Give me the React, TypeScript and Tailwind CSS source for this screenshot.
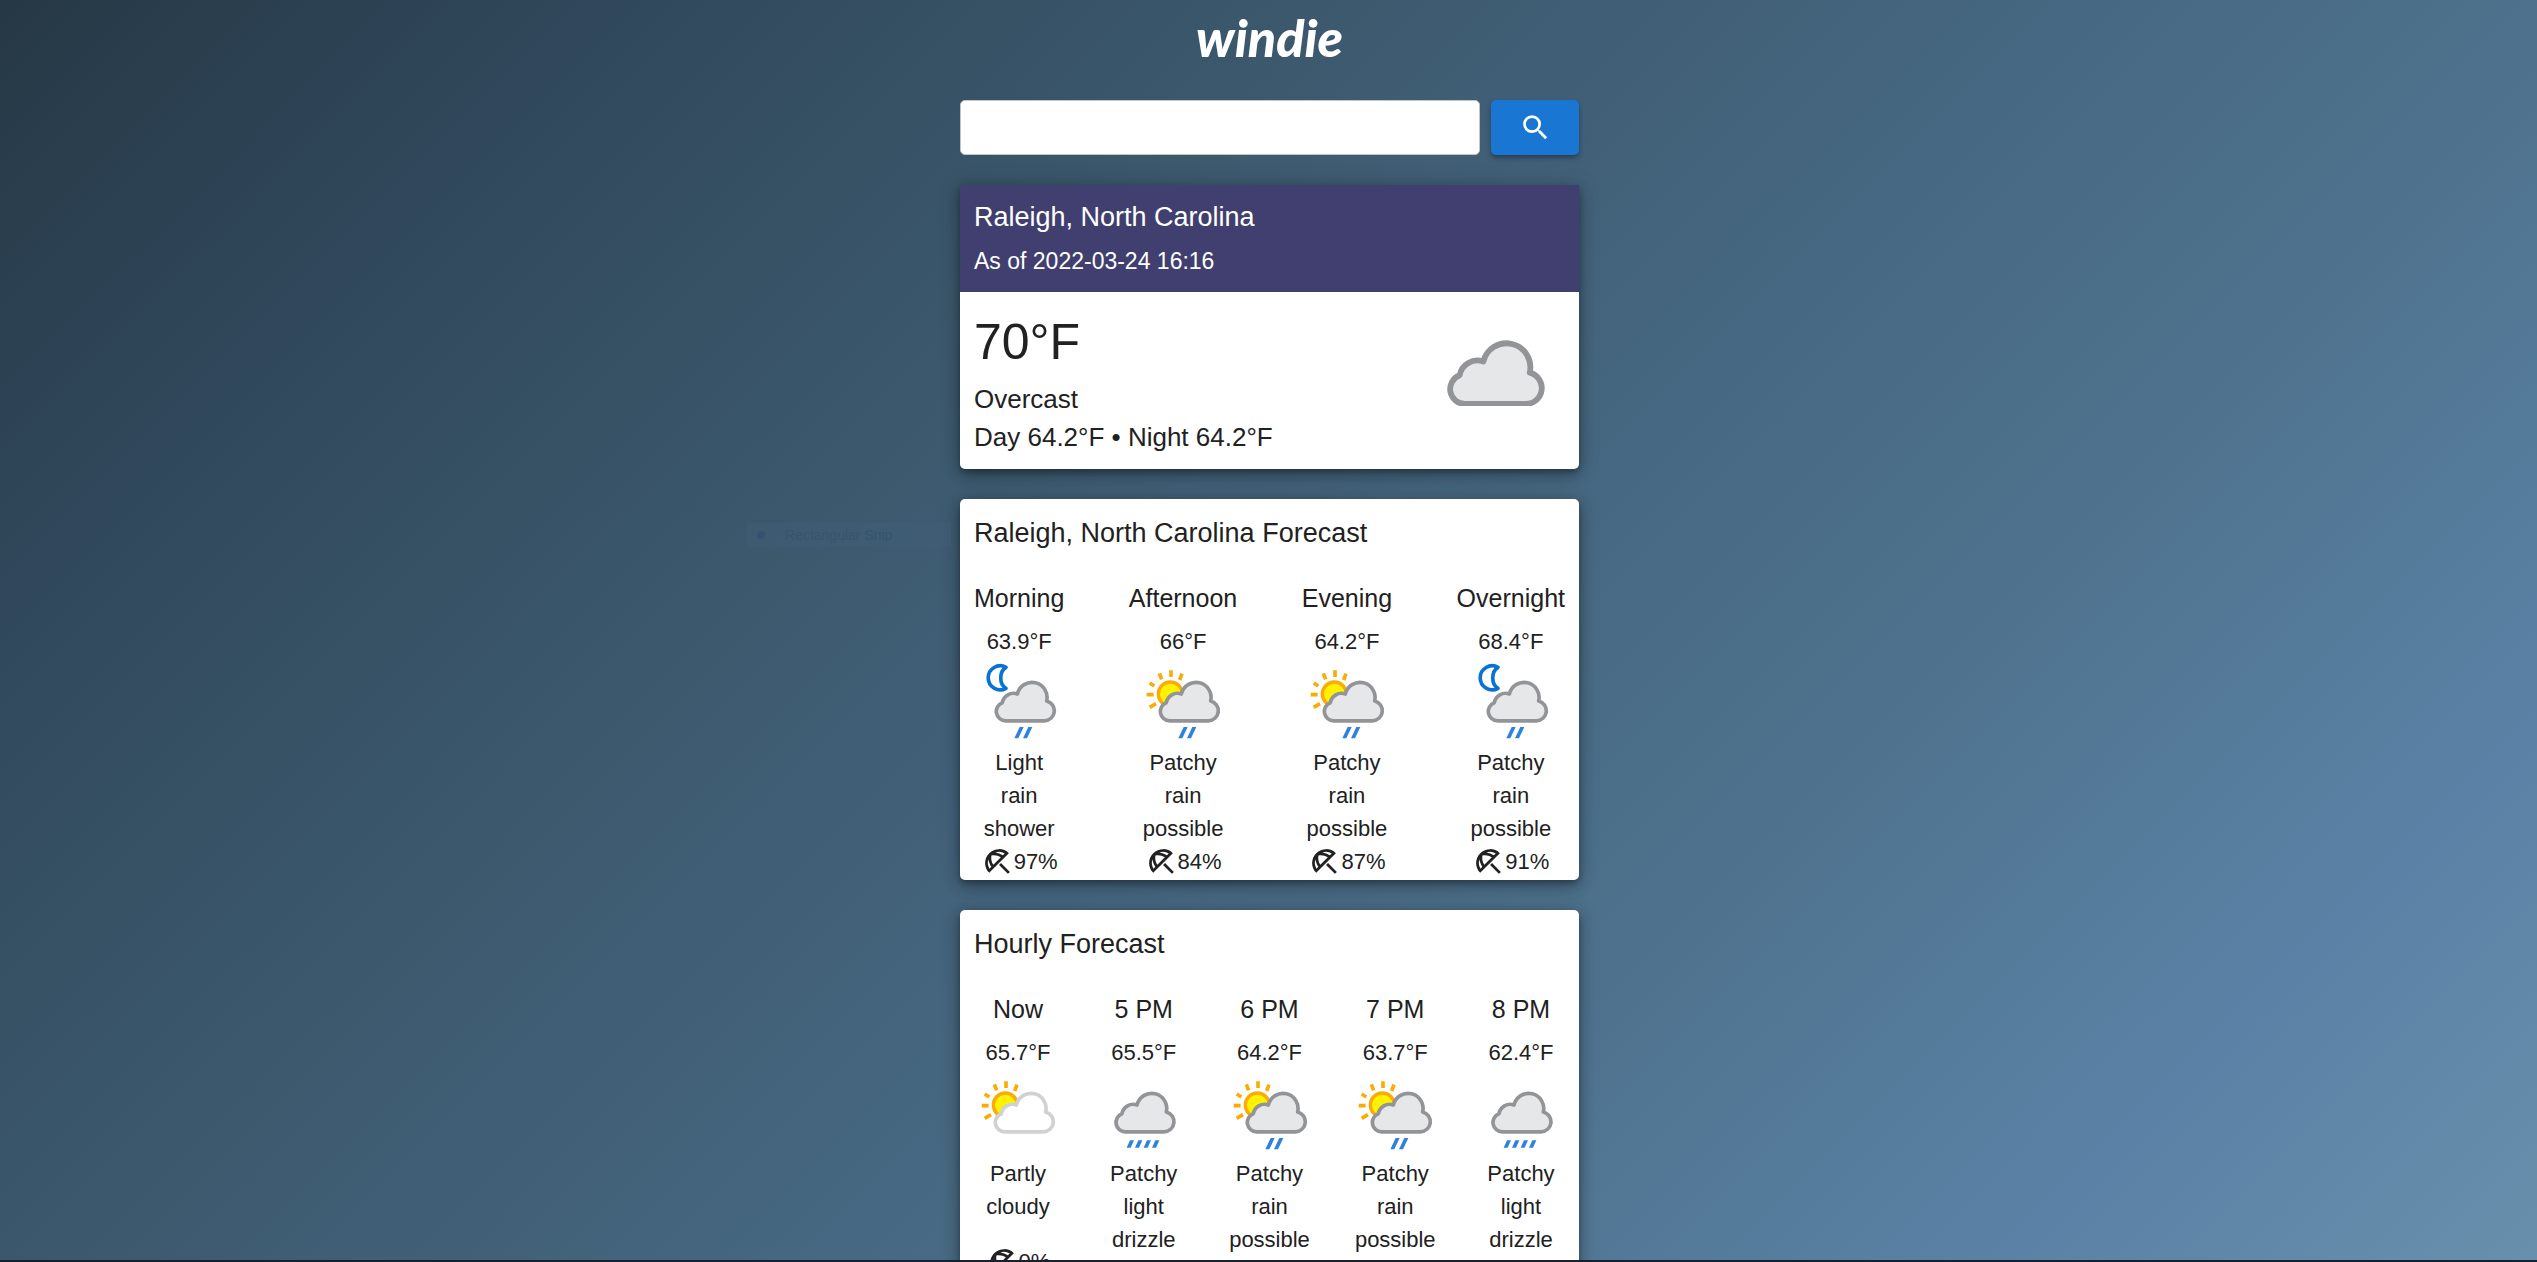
import { MdOutlineBeachAccess, MdSearch } from "react-icons/md";

type IconKind = "moonRain" | "sunRain" | "partly" | "drizzle";

const CLOUD =
  "M116 197.5 A28.2 28.2 0 0 1 106 143 A34 34 0 0 1 151 117 A45.2 45.2 0 0 1 239 138 A30.2 30.2 0 0 1 232 197.5 Z";

function Cloud({ light = false }: { light?: boolean }) {
  return (
    <path
      d={CLOUD}
      fill={light ? "#ffffff" : "#e6e7e9"}
      stroke={light ? "#d0d1d2" : "#929497"}
      strokeWidth="11"
      strokeLinejoin="round"
    />
  );
}

function Sun() {
  return (
    <g>
      <circle cx="118" cy="117" r="36" fill="#fff200" stroke="#fcab06" strokeWidth="10" />
      <path
        d="M120 46V66M85 55L92 73M153 56L146 75M56 84L70 93M47 119H68M56 157L75 146"
        stroke="#fcab06"
        strokeWidth="11"
      />
    </g>
  );
}

function Moon() {
  return (
    <path
      d="M117 37 A36 36 0 1 0 117 100 C96 88 96 50 117 37 Z"
      fill="#ffffff"
      stroke="#0a72d2"
      strokeWidth="11"
      strokeLinejoin="round"
    />
  );
}

function WeatherIcon({ kind }: { kind: IconKind }) {
  return (
    <svg viewBox="24 9 264 264" className="size-[88px]" fill="none" aria-hidden="true">
      {kind === "moonRain" && <Moon />}
      {(kind === "sunRain" || kind === "partly") && <Sun />}
      {kind === "drizzle" ? (
        <g>
          <g transform="translate(-16 0)">
            <Cloud />
          </g>
          <path
            d="M114 223h12l-10 22h-12zM139 223h12l-10 22h-12zM165 223h12l-10 22h-12zM190 223h12l-10 22h-12z"
            fill="#2f82dc"
          />
        </g>
      ) : (
        <Cloud light={kind === "partly"} />
      )}
      {(kind === "sunRain" || kind === "moonRain") && (
        <path d="M158 216h12l-16 34h-12zM184 216h12l-16 34h-12z" fill="#2f82dc" />
      )}
    </svg>
  );
}

interface Period {
  label: string;
  temp: string;
  icon: IconKind;
  text: string;
  chance: string;
}

const daily: Period[] = [
  { label: "Morning", temp: "63.9°F", icon: "moonRain", text: "Light rain shower", chance: "97%" },
  { label: "Afternoon", temp: "66°F", icon: "sunRain", text: "Patchy rain possible", chance: "84%" },
  { label: "Evening", temp: "64.2°F", icon: "sunRain", text: "Patchy rain possible", chance: "87%" },
  { label: "Overnight", temp: "68.4°F", icon: "moonRain", text: "Patchy rain possible", chance: "91%" },
];

const hourly: Period[] = [
  { label: "Now", temp: "65.7°F", icon: "partly", text: "Partly cloudy", chance: "0%" },
  { label: "5 PM", temp: "65.5°F", icon: "drizzle", text: "Patchy light drizzle", chance: "65%" },
  { label: "6 PM", temp: "64.2°F", icon: "sunRain", text: "Patchy rain possible", chance: "87%" },
  { label: "7 PM", temp: "63.7°F", icon: "sunRain", text: "Patchy rain possible", chance: "80%" },
  { label: "8 PM", temp: "62.4°F", icon: "drizzle", text: "Patchy light drizzle", chance: "74%" },
];

const CARD =
  "overflow-hidden bg-white shadow-[0_3px_5px_rgba(0,0,0,0.2),0_6px_14px_rgba(0,0,0,0.28),0_1px_22px_rgba(0,0,0,0.16)]";

function ForecastCard({ title, periods }: { title: string; periods: Period[] }) {
  return (
    <section className={`${CARD} rounded-[5px] px-3.5 pt-3 pb-0.5`}>
      <h2 className="text-[27px] leading-[44px]">{title}</h2>
      <ul className="mt-6 flex justify-between">
        {periods.map((p) => (
          <li key={p.label} className="flex flex-col items-center text-center text-[22px] leading-[33px]">
            <h3 className="mb-2 text-[25px] leading-[38px]">{p.label}</h3>
            <p>{p.temp}</p>
            <WeatherIcon kind={p.icon} />
            <p className="w-min">{p.text}</p>
            <p className={p.chance === "0%" ? "mt-[22px] flex items-center" : "flex items-center"}>
              <MdOutlineBeachAccess className="size-[33px]" aria-hidden="true" />
              {p.chance}
            </p>
          </li>
        ))}
      </ul>
    </section>
  );
}

export default function App() {
  return (
    <div className="relative h-screen overflow-hidden border-b-2 border-[#17202c] bg-[linear-gradient(135deg,#263845_0%,#2f4659_14%,#3a566a_32%,#44647d_50%,#4e728d_68%,#5b82a6_86%,#688fab_100%)] pl-0.5 font-['Liberation_Sans',Arial,sans-serif] text-[#212121]">
      <div
        aria-hidden="true"
        className="absolute top-[523px] left-[747px] flex h-6 w-[204px] items-center gap-5 bg-[#41607a]/40 px-2.5 text-sm text-[#33506a]/60"
      >
        <span className="size-2 rounded-full bg-[#2d4f70]/60" />
        Rectangular Snip
      </div>
      <main className="mx-auto flex w-full max-w-[619px] flex-col gap-[30px]">
        <header>
          <h1 className="pt-2 text-center font-[Lato,sans-serif] text-[52px] leading-[58px] font-black text-white italic">
            windie
          </h1>
          <form className="mt-[34px] flex gap-[11px]" onSubmit={(e) => e.preventDefault()}>
            <input
              type="text"
              aria-label="Search location"
              className="h-[55px] min-w-0 flex-1 rounded-[5px] border border-[#c4c4c4] bg-white px-4 text-[22px] outline-none"
            />
            <button
              type="submit"
              aria-label="Search"
              className="flex h-[55px] w-[88px] items-center justify-center rounded-[5px] bg-[#1976d2] text-white shadow-[0_3px_5px_rgba(0,0,0,0.35)]"
            >
              <MdSearch className="size-[33px]" />
            </button>
          </form>
        </header>

        <section className={`${CARD} rounded-b-[5px]`}>
          <div className="bg-[#413f6f] px-3.5 pt-2.5 pb-3.5 text-white">
            <h2 className="text-[27px] leading-[44px]">Raleigh, North Carolina</h2>
            <p className="mt-1.5 text-[23px] leading-[33px]">As of 2022-03-24 16:16</p>
          </div>
          <div className="flex items-center justify-between px-3.5 pt-3 pb-[13px]">
            <div className="text-[26px] leading-[38px]">
              <p className="text-[50px] leading-[76px]">70°F</p>
              <p>Overcast</p>
              <p>Day 64.2°F • Night 64.2°F</p>
            </div>
            <svg viewBox="82 76 186 127" className="mr-5 mb-3.5 w-[98px]" aria-hidden="true">
              <Cloud />
            </svg>
          </div>
        </section>

        <ForecastCard title="Raleigh, North Carolina Forecast" periods={daily} />
        <ForecastCard title="Hourly Forecast" periods={hourly} />
      </main>
    </div>
  );
}
